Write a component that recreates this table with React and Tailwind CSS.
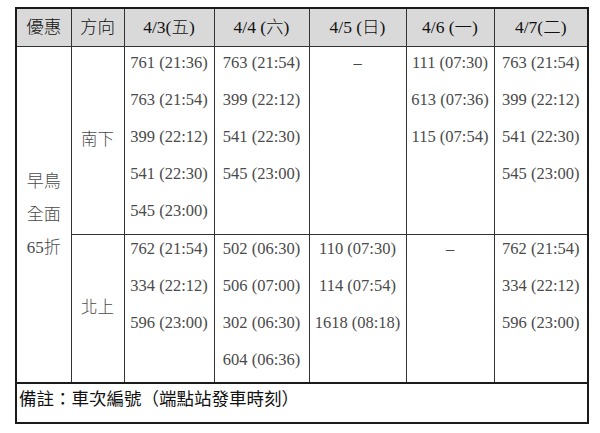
const FONT = { fontFamily: '"Liberation Serif", "Noto Sans CJK TC", serif' }

const headers = ['優惠', '方向', '4/3(五)', '4/4 (六)', '4/5 (日)', '4/6 (一)', '4/7(二)']
const widths = ['w-[55px]', 'w-[53px]', 'w-[90px]', 'w-[95px]', 'w-[97px]', 'w-[88px]', 'w-[94px]']

const south = [
  ['761 (21:36)', '763 (21:54)', '399 (22:12)', '541 (22:30)', '545 (23:00)'],
  ['763 (21:54)', '399 (22:12)', '541 (22:30)', '545 (23:00)'],
  ['–'],
  ['111 (07:30)', '613 (07:36)', '115 (07:54)'],
  ['763 (21:54)', '399 (22:12)', '541 (22:30)', '545 (23:00)'],
]

const north = [
  ['762 (21:54)', '334 (22:12)', '596 (23:00)'],
  ['502 (06:30)', '506 (07:00)', '302 (06:30)', '604 (06:36)'],
  ['110 (07:30)', '114 (07:54)', '1618 (08:18)'],
  ['–'],
  ['762 (21:54)', '334 (22:12)', '596 (23:00)'],
]

function Lines({ items, shift }) {
  return (
    <div className={shift ? '-mt-[5px]' : '-mt-[3px]'}>
      {items.map((t, i) => (
        <div key={i} className="h-[37px] leading-[37px] whitespace-nowrap">
          {t}
        </div>
      ))}
    </div>
  )
}

export default function App() {
  return (
    <div className="w-[600px] h-[433px] bg-white pt-[7px] pl-[15px]" style={FONT}>
      <table className="border-collapse border-2 border-[#1a1a1a] table-fixed text-[16.5px] text-[#4a4a4a] font-light">
        <thead>
          <tr className="h-[38px] bg-[#d9d9d9]">
            {headers.map((h, i) => (
              <th
                key={h}
                className={`${widths[i]} border border-[#333] p-0 text-center font-light text-[17.5px] text-[#111]`}
              >
                {h}
              </th>
            ))}
          </tr>
        </thead>
        <tbody>
          <tr className="h-[188px]">
            <td rowSpan={2} className="border border-[#333] p-0 text-center align-middle text-[17px] leading-[33px]">
              早鳥
              <br />
              全面
              <br />
              65折
            </td>
            <td className="border border-[#333] p-0 text-center align-middle text-[16.5px]">南下</td>
            {south.map((col, i) => (
              <td key={i} className="border border-[#333] p-0 text-center align-top">
                <Lines items={col} />
              </td>
            ))}
          </tr>
          <tr className="h-[149px]">
            <td className="border border-[#333] p-0 text-center align-middle text-[16.5px]">北上</td>
            {north.map((col, i) => (
              <td key={i} className="border border-[#333] p-0 text-center align-top">
                <Lines items={col} shift />
              </td>
            ))}
          </tr>
          <tr className="h-[40px] border-t-2 border-[#1a1a1a]">
            <td colSpan={7} className="px-[2px] pt-[2px] align-top text-[17.5px] leading-[26px] font-normal text-[#111]">
              備註：車次編號（端點站發車時刻）
            </td>
          </tr>
        </tbody>
      </table>
    </div>
  )
}
